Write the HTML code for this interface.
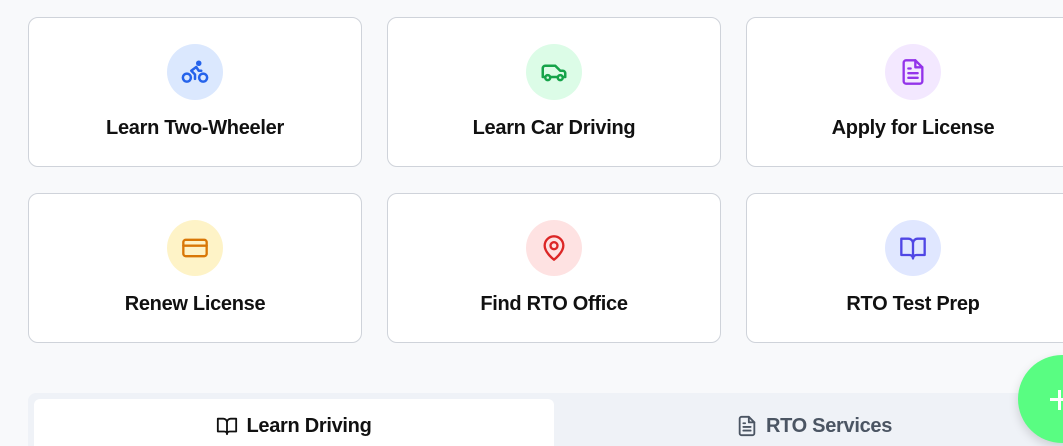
<!DOCTYPE html>
<html><head><style>
*{box-sizing:border-box;margin:0;padding:0}
html,body{width:1063px;height:446px;overflow:hidden}
body{background:#f8f9fb;font-family:"Liberation Sans","DejaVu Sans",sans-serif;position:relative}
.card{position:absolute;width:334px;height:150px;background:#fff;border:1px solid #cfd3da;border-radius:10px}
.ic{position:absolute;left:138px;top:26px;width:56px;height:56px;border-radius:50%;display:flex;align-items:center;justify-content:center}
.t{position:absolute;left:0;right:0;top:99px;text-align:center;font-size:20px;color:#111;font-weight:bold;letter-spacing:-0.3px}
svg{fill:none;stroke-width:2;stroke-linecap:round;stroke-linejoin:round}
.tabs{position:absolute;left:28px;top:393px;width:1040px;height:60px;background:#eff2f7;border-radius:8px}
.tab{position:absolute;top:6px;height:60px;font-size:20px;font-weight:bold;letter-spacing:-0.3px;display:flex;justify-content:center;padding-top:16px;gap:8px}
.fab{position:absolute;left:1018px;top:355px;width:88px;height:88px;border-radius:50%;background:#59fd82;box-shadow:0 4px 10px rgba(0,0,0,.15)}
</style></head><body>
<div class="card" style="left:28px;top:17px"><div class="ic" style="background:#dbe8fe"><svg width="30" height="30" viewBox="0 0 24 24" stroke="#2563eb"><circle cx="5.5" cy="16.5" r="3.2"/><circle cx="18.5" cy="16.5" r="3.2"/><circle cx="15" cy="5" r="1.2" fill="#2563eb"/><path d="M12 17.5V14l-3-3 4-3 2 3h2"/></svg></div><div class="t">Learn Two-Wheeler</div></div>
<div class="card" style="left:387px;top:17px"><div class="ic" style="background:#dcfce7"><svg width="30" height="30" viewBox="0 0 24 24" stroke="#16a34a"><path d="M3 16V9a2 2 0 0 1 2-2h8l4 4h2a2 2 0 0 1 2 2v3h-2M5 16H3M15 16H9"/><circle cx="7" cy="16.5" r="2"/><circle cx="17" cy="16.5" r="2"/></svg></div><div class="t">Learn Car Driving</div></div>
<div class="card" style="left:746px;top:17px;width:340px"><div class="ic" style="background:#f3e8ff"><svg width="28" height="28" viewBox="0 0 24 24" stroke="#9333ea"><path d="M14 2H6a2 2 0 0 0-2 2v16a2 2 0 0 0 2 2h12a2 2 0 0 0 2-2V8z"/><path d="M14 2v6h6M16 13H8M16 17H8M10 9H8"/></svg></div><div class="t" style="right:6px">Apply for License</div></div>
<div class="card" style="left:28px;top:193px"><div class="ic" style="background:#fef3c7"><svg width="28" height="28" viewBox="0 0 24 24" stroke="#d97706"><rect x="2" y="5" width="20" height="14" rx="2"/><path d="M2 10h20"/></svg></div><div class="t">Renew License</div></div>
<div class="card" style="left:387px;top:193px"><div class="ic" style="background:#fee2e2"><svg width="28" height="28" viewBox="0 0 24 24" stroke="#dc2626"><path d="M20 10c0 6-8 12-8 12s-8-6-8-12a8 8 0 0 1 16 0z"/><circle cx="12" cy="10" r="3"/></svg></div><div class="t">Find RTO Office</div></div>
<div class="card" style="left:746px;top:193px;width:340px"><div class="ic" style="background:#e0e7ff"><svg width="28" height="28" viewBox="0 0 24 24" stroke="#4f46e5"><path d="M2 4h6a4 4 0 0 1 4 4v13a3 3 0 0 0-3-3H2zM22 4h-6a4 4 0 0 0-4 4v13a3 3 0 0 1 3-3h7z"/></svg></div><div class="t" style="right:6px">RTO Test Prep</div></div>
<div class="tabs">
<div class="tab" style="left:6px;width:520px;background:#fff;border-radius:6px;color:#111"><svg width="22" height="22" viewBox="0 0 24 24" stroke="#111"><path d="M2 4h6a4 4 0 0 1 4 4v13a3 3 0 0 0-3-3H2zM22 4h-6a4 4 0 0 0-4 4v13a3 3 0 0 1 3-3h7z"/></svg>Learn Driving</div>
<div class="tab" style="left:526px;width:550px;color:#4b5563;padding-right:30px"><svg width="22" height="22" viewBox="0 0 24 24" stroke="#4b5563"><path d="M14 2H6a2 2 0 0 0-2 2v16a2 2 0 0 0 2 2h12a2 2 0 0 0 2-2V8z"/><path d="M14 2v6h6M16 13H8M16 17H8M10 9H8"/></svg>RTO Services</div>
</div>
<div class="fab"><div style="position:absolute;left:32px;top:43px;width:20px;height:3px;background:#fff"></div><div style="position:absolute;left:40px;top:35px;width:3px;height:20px;background:#fff"></div></div>
</body></html>
